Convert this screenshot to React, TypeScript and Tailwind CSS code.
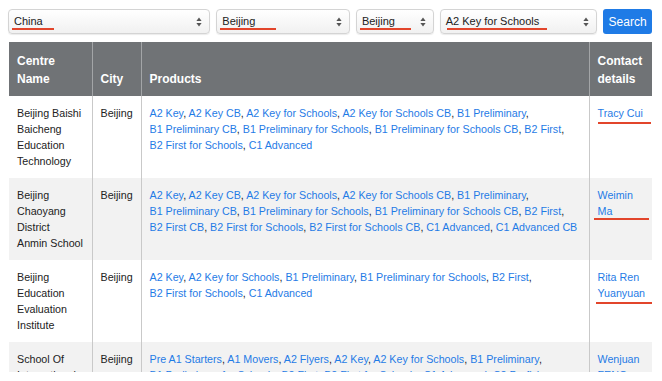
const rows = [
  {
    name: 'Beijing Baishi\nBaicheng\nEducation\nTechnology',
    city: 'Beijing',
    products: ['A2 Key', 'A2 Key CB', 'A2 Key for Schools', 'A2 Key for Schools CB', 'B1 Preliminary', 'B1 Preliminary CB', 'B1 Preliminary for Schools', 'B1 Preliminary for Schools CB', 'B2 First', 'B2 First for Schools', 'C1 Advanced'],
    contact: 'Tracy Cui',
    mark: 'top-[17px] left-[0px] w-[53px]',
  },
  {
    name: 'Beijing\nChaoyang\nDistrict\nAnmin School',
    city: 'Beijing',
    products: ['A2 Key', 'A2 Key CB', 'A2 Key for Schools', 'A2 Key for Schools CB', 'B1 Preliminary', 'B1 Preliminary CB', 'B1 Preliminary for Schools', 'B1 Preliminary for Schools CB', 'B2 First', 'B2 First CB', 'B2 First for Schools', 'B2 First for Schools CB', 'C1 Advanced', 'C1 Advanced CB'],
    contact: 'Weimin Ma',
    mark: 'top-[31px] left-[-4px] w-[55px]',
  },
  {
    name: 'Beijing\nEducation\nEvaluation\nInstitute',
    city: 'Beijing',
    products: ['A2 Key', 'A2 Key for Schools', 'B1 Preliminary', 'B1 Preliminary for Schools', 'B2 First', 'B2 First for Schools', 'C1 Advanced'],
    contact: 'Rita Ren Yuanyuan',
    mark: 'top-[33px] left-[-2px] w-[56px]',
  },
  {
    name: 'School Of\nInternational\nEducation\nBeijing',
    city: 'Beijing',
    products: ['Pre A1 Starters', 'A1 Movers', 'A2 Flyers', 'A2 Key', 'A2 Key for Schools', 'B1 Preliminary', 'B1 Preliminary for Schools', 'B2 First', 'B2 First for Schools', 'C1 Advanced', 'C2 Proficiency'],
    contact: 'Wenjuan FENG',
    mark: '',
  },
]

function Arrows() {
  return (
    <svg width="6" height="10" viewBox="0 0 6 10" className="shrink-0">
      <path d="M3 0.5 L5.6 4 H0.4 Z" fill="#555" />
      <path d="M3 9.5 L5.6 6 H0.4 Z" fill="#555" />
    </svg>
  )
}

function Select({ value, width, mark }: { value: string; width: string; mark: string }) {
  return (
    <div className={`relative flex h-[25px] items-center justify-between rounded-[4px] border border-[#d4d4d4] bg-gradient-to-b from-[#ffffff] to-[#f1f1f1] pl-[5px] pr-[7px] shadow-[0_1px_1px_rgba(0,0,0,0.08)] ${width}`}>
      <span className="text-[11px] text-[#222]">{value}</span>
      <Arrows />
      <div className={`absolute top-[18px] h-[2px] bg-[#e2452b] ${mark}`} />
    </div>
  )
}

export default function App() {
  return (
    <div className="h-[381px] w-[662px] bg-white" style={{ fontFamily: '"Liberation Sans", Arial, sans-serif' }}>
      <div className="h-[372px] overflow-hidden pl-[8px] pr-[10px] pt-[9px]">
        {/* Filters */}
        <div className="flex gap-[6px]">
          <Select value="China" width="w-[203px]" mark="left-[3px] w-[42px]" />
          <Select value="Beijing" width="w-[134px]" mark="left-[3px] w-[56px]" />
          <Select value="Beijing" width="w-[78px]" mark="left-[3px] w-[51px]" />
          <Select value="A2 Key for Schools" width="w-[158px]" mark="left-[6px] w-[100px]" />
          <button className="h-[25px] w-[49px] rounded-[3px] bg-[#1f7be6] text-[12px] text-white">Search</button>
        </div>

        {/* Results */}
        <table className="mt-[8px] ml-[1px] w-[643px] table-fixed border-collapse text-[10.7px] leading-[16px]">
          <colgroup>
            <col className="w-[83px]" />
            <col className="w-[49px]" />
            <col className="w-[448px]" />
            <col className="w-[63px]" />
          </colgroup>
          <thead>
            <tr className="bg-[#707376] text-left align-bottom text-[12px] font-bold leading-[18px] text-white">
              <th className="px-[8px] pt-[10px] pb-[8px]">Centre Name</th>
              <th className="border-l border-[#a3a5a7] px-[8px] pt-[10px] pb-[8px]">City</th>
              <th className="border-l border-[#a3a5a7] px-[8px] pt-[10px] pb-[8px]">Products</th>
              <th className="border-l border-[#a3a5a7] pl-[8px] pr-[4px] pt-[10px] pb-[8px]">Contact details</th>
            </tr>
          </thead>
          <tbody>
            {rows.map((r, i) => (
              <tr key={r.name} className={`align-top ${i % 2 ? 'bg-[#f2f2f2]' : 'bg-white'}`}>
                <td className="whitespace-pre-line pl-[8px] pr-[4px] pt-[9px] pb-[9px] text-[#222]">{r.name}</td>
                <td className="border-l border-[#c9c9c9] px-[8px] pt-[9px] pb-[9px] text-[#222]">{r.city}</td>
                <td className="border-l border-[#c9c9c9] pl-[8px] pr-[8px] pt-[9px] pb-[9px] text-[#222]">
                  {r.products.map((p, j) => (
                    <span key={p}>
                      <a className="whitespace-nowrap text-[#1f7be6]">{p}</a>
                      {j < r.products.length - 1 ? ', ' : ''}
                    </span>
                  ))}
                </td>
                <td className="border-l border-[#c9c9c9] pl-[8px] pr-[4px] pt-[9px] pb-[9px]">
                  <div className="relative">
                    <a className="text-[#1f7be6]">{r.contact}</a>
                    {r.mark && <div className={`absolute h-[2px] bg-[#e2452b] ${r.mark}`} />}
                  </div>
                </td>
              </tr>
            ))}
          </tbody>
        </table>
      </div>
    </div>
  )
}
